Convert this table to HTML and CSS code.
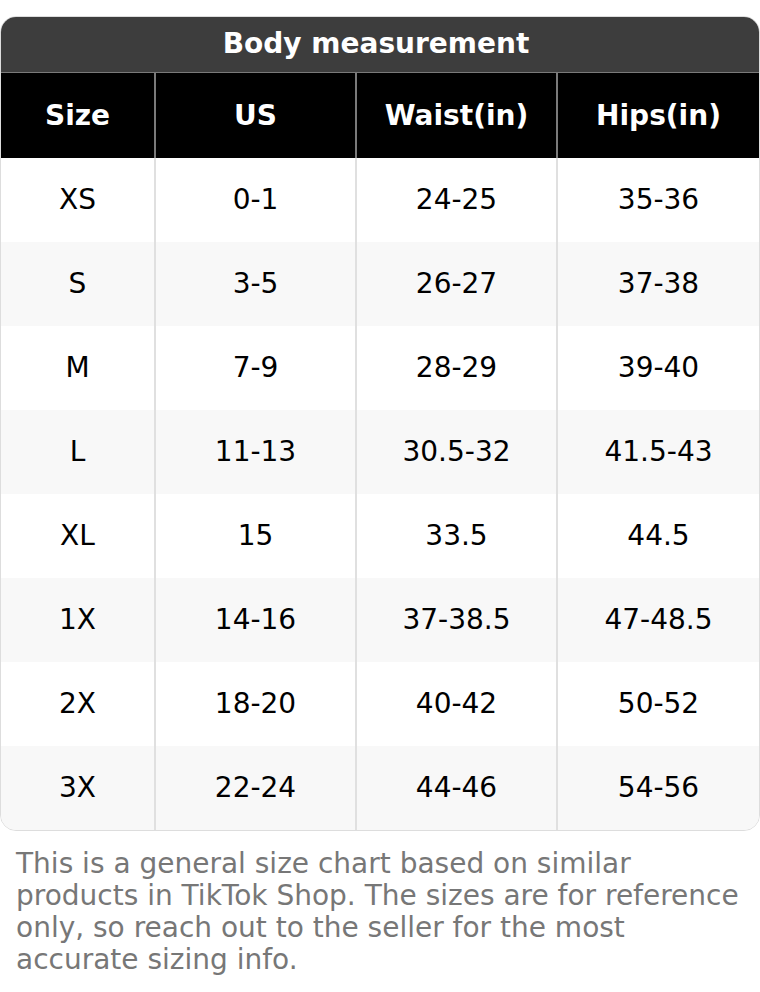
FILE: index.html
```html
<!DOCTYPE html>
<html>
<head>
<meta charset="utf-8">
<link rel="stylesheet" href="styles.css">
</head>
<body>
<div class="chart">
  <div class="title">Body measurement</div>
  <div class="grid head">
    <div class="cell">Size</div><div class="cell">US</div><div class="cell">Waist(in)</div><div class="cell">Hips(in)</div>
  </div>
  <div class="grid row"><div class="cell">XS</div><div class="cell">0-1</div><div class="cell">24-25</div><div class="cell">35-36</div></div>
  <div class="grid row alt"><div class="cell">S</div><div class="cell">3-5</div><div class="cell">26-27</div><div class="cell">37-38</div></div>
  <div class="grid row"><div class="cell">M</div><div class="cell">7-9</div><div class="cell">28-29</div><div class="cell">39-40</div></div>
  <div class="grid row alt"><div class="cell">L</div><div class="cell">11-13</div><div class="cell">30.5-32</div><div class="cell">41.5-43</div></div>
  <div class="grid row"><div class="cell">XL</div><div class="cell">15</div><div class="cell">33.5</div><div class="cell">44.5</div></div>
  <div class="grid row alt"><div class="cell">1X</div><div class="cell">14-16</div><div class="cell">37-38.5</div><div class="cell">47-48.5</div></div>
  <div class="grid row"><div class="cell">2X</div><div class="cell">18-20</div><div class="cell">40-42</div><div class="cell">50-52</div></div>
  <div class="grid row alt"><div class="cell">3X</div><div class="cell">22-24</div><div class="cell">44-46</div><div class="cell">54-56</div></div>
</div>
<p class="note">This is a general size chart based on similar products in TikTok Shop. The sizes are for reference only, so reach out to the seller for the most accurate sizing info.</p>
</body>
</html>
```

FILE: styles.css
```css
html, body {
  margin: 0;
  padding: 0;
  background: #ffffff;
  font-family: "DejaVu Sans", sans-serif;
}
body {
  padding-top: 16px;
}
.chart {
  border: 1px solid #dddddd;
  border-radius: 16px;
  overflow: hidden;
}
.title {
  height: 56px;
  box-sizing: border-box;
  background: #3d3d3d;
  color: #ffffff;
  font-weight: bold;
  font-size: 28px;
  display: flex;
  align-items: center;
  justify-content: center;
  padding-bottom: 2px;
  padding-right: 8px;
  border-bottom: 1px solid #7a7a7a;
}
.grid {
  display: grid;
  grid-template-columns: 153px 201px 201px 1fr;
}
.cell {
  display: flex;
  align-items: center;
  justify-content: center;
  font-size: 28px;
  color: #000000;
  padding-bottom: 1px;
}
.cell + .cell {
  border-left: 2px solid #e0e0e0;
}
.head {
  height: 85px;
  background: #000000;
}
.head .cell {
  color: #ffffff;
  font-weight: bold;
  padding-bottom: 1px;
}
.head .cell + .cell {
  border-left-color: #7a7a7a;
}
.row {
  height: 84px;
  background: #ffffff;
}
.row.alt {
  background: #f8f8f8;
}
.note {
  margin: 17px 16px 0 16px;
  font-size: 28px;
  line-height: 32px;
  color: #777777;
}
```
